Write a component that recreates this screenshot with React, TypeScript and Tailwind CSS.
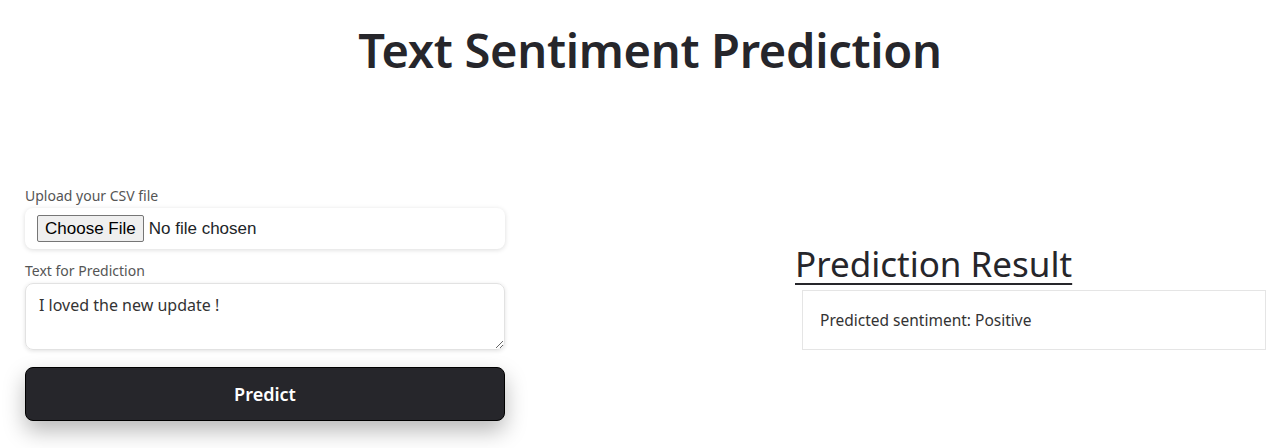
import { useState } from "react";

export default function App() {
  const [text, setText] = useState("I loved the new update !");

  return (
    <div className="w-[1280px] h-[448px] bg-white overflow-hidden font-['Noto_Sans',sans-serif] text-[#212529]">
      <h1 className="text-center text-[47px] font-semibold leading-none pt-[27px] pl-[20px] text-[#26262b] tracking-[-0.3px]">
        Text Sentiment Prediction
      </h1>

      <div className="flex items-center mt-[115px]">
        {/* left: form */}
        <div className="w-[480px] ml-[25px] flex flex-col">
          <label className="text-[14px] text-[#555] leading-none mb-[5px]">
            Upload your CSV file
          </label>
          <div className="h-[41px] rounded-lg bg-white shadow-[0_1px_5px_rgba(0,0,0,0.14)] flex items-center px-3">
            <input
              type="file"
              className="text-[17px] font-['Liberation_Sans',sans-serif] file:mr-[5px] file:px-[7px] file:py-0 file:border file:border-[#767676] file:bg-[#efefef] file:rounded-[2px] file:text-[17px] file:text-black"
            />
          </div>

          <label className="text-[14px] text-[#555] leading-none mt-[15px] mb-[5px]">
            Text for Prediction
          </label>
          <textarea
            value={text}
            onChange={(e) => setText(e.target.value)}
            className="h-[67px] rounded-lg border border-[#e2e2e2] shadow-[0_1px_4px_rgba(0,0,0,0.12)] px-[13px] py-[11px] text-[16px] text-[#333] leading-tight outline-none"
          />

          <button className="mt-[17px] h-[54px] rounded-lg bg-[#26262b] border border-black text-white text-[18px] font-semibold shadow-[0_10px_22px_rgba(0,0,0,0.28)]">
            Predict
          </button>
        </div>

        {/* right: result */}
        <div className="ml-[290px] flex flex-col mb-[18px]">
          <h2 className="text-[35px] leading-tight underline underline-offset-[6px] decoration-[2px] text-[#26262b] mb-[5px]">
            Prediction Result
          </h2>
          <div className="ml-[7px] w-[464px] h-[60px] border border-[#e5e5e5] flex items-center px-[17px] text-[15.5px] text-[#333]">
            Predicted sentiment: Positive
          </div>
        </div>
      </div>
    </div>
  );
}
